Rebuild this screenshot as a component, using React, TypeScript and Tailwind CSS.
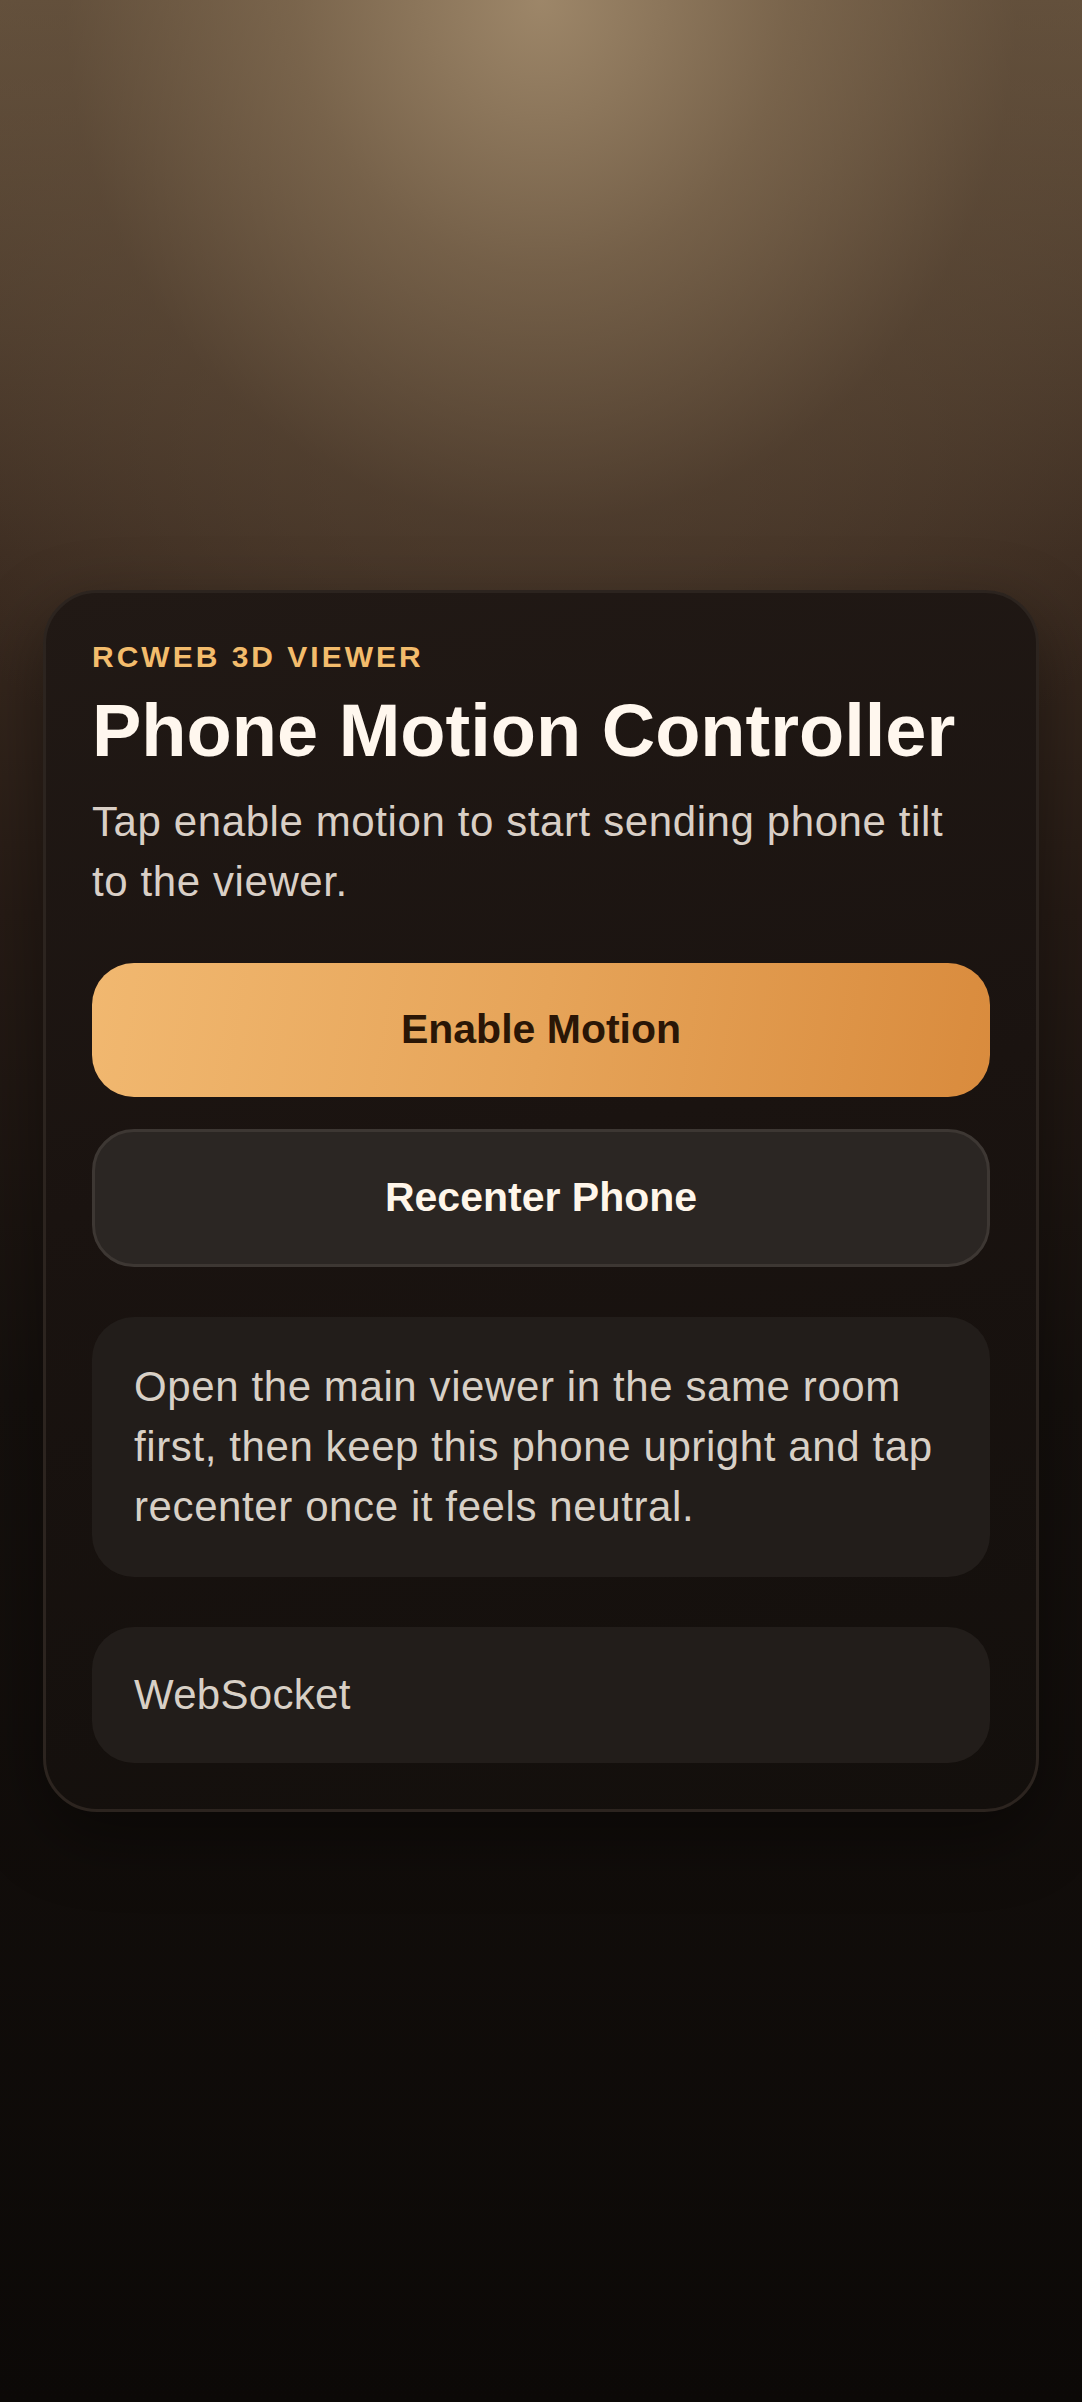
import React from "react";

export default function App() {
  return (
    <div
      className="min-h-screen w-full flex items-center justify-center px-[43px] [background-image:radial-gradient(ellipse_820px_900px_at_50%_0%,rgba(160,137,107,0.95)_0%,rgba(130,108,82,0.72)_30%,rgba(96,77,58,0.45)_58%,rgba(60,44,32,0)_100%),linear-gradient(180deg,#65523d_0%,#3b2b20_23%,#261b15_38%,#15100d_58%,#0c0907_100%)]"
      style={{ fontFamily: '"Liberation Sans", Arial, sans-serif' }}
    >
      <div className="w-full rounded-[54px] border-[3px] border-[#2c241f] bg-[linear-gradient(170deg,#211915_0%,#1a1310_45%,#130f0c_100%)] px-[46px] py-[46px] shadow-[0_24px_70px_rgba(0,0,0,0.4)]">
        <div className="text-[30px] leading-[36px] font-bold tracking-[3px] text-[#f3bc6c]">
          RCWEB 3D VIEWER
        </div>
        <h1 className="mt-[14px] text-[74px] leading-[84px] font-bold text-[#fff7ee]">
          Phone Motion Controller
        </h1>
        <p className="mt-[19px] text-[42px] leading-[60px] tracking-[0.6px] text-[#d9cfc6]">
          Tap enable motion to start sending phone tilt to the viewer.
        </p>

        <button
          type="button"
          className="mt-[51px] flex h-[134px] w-full items-center justify-center rounded-[42px] bg-[linear-gradient(100deg,#f1b870_0%,#e6a459_50%,#d98b3d_100%)] text-[41px] font-bold text-[#2a1606]"
        >
          Enable Motion
        </button>

        <button
          type="button"
          className="mt-[32px] flex h-[138px] w-full items-center justify-center rounded-[42px] border-[3px] border-[#3d3733] bg-[#2b2623] text-[41px] font-bold text-[#fff6ea]"
        >
          Recenter Phone
        </button>

        <div className="mt-[50px] rounded-[42px] bg-[#221d1a] px-[42px] py-[40px] text-[42px] leading-[60px] tracking-[0.6px] text-[#d8d0c6]">
          Open the main viewer in the same room first, then keep this phone
          upright and tap recenter once it feels neutral.
        </div>

        <div className="mt-[50px] flex h-[136px] items-center rounded-[42px] bg-[#221d1a] px-[42px] text-[42px] leading-[60px] tracking-[0.3px] text-[#d8d0c6]">
          WebSocket
        </div>
      </div>
    </div>
  );
}
